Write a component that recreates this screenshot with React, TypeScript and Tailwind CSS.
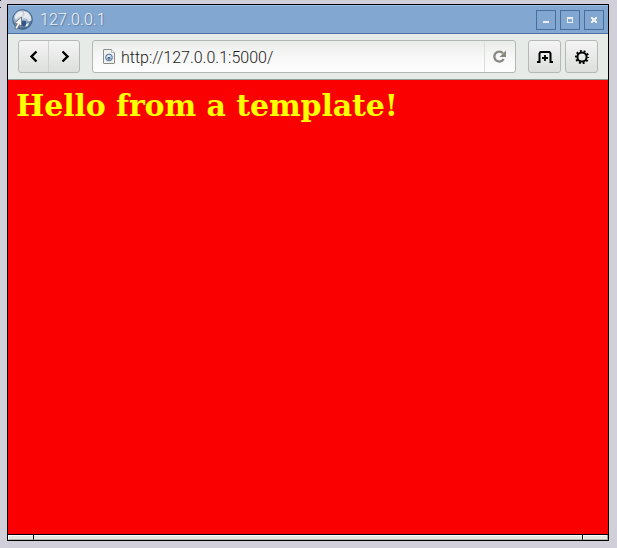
import React from "react";

function GlobeIcon() {
  return (
    <svg width="22" height="22" viewBox="0 0 22 22" className="block shrink-0">
      <defs>
        <radialGradient id="globe" cx="0.42" cy="0.3" r="0.75">
          <stop offset="0" stopColor="#dfe7f0" />
          <stop offset="0.5" stopColor="#9db4d0" />
          <stop offset="1" stopColor="#2f5588" />
        </radialGradient>
      </defs>
      <circle cx="10.5" cy="10.5" r="9.8" fill="url(#globe)" stroke="#426182" />
      <path d="M2.5 8 5 4l4-2 2 2-2 3-3 1-2 3ZM12 2.5l4 1 3 4 .5 4-3 1-2-3-4-1 2-2ZM14 15l3-1-1 3-2.5 1Z" fill="#f0f1ee" opacity=".85" />
      <path d="M10 11.5 14 12v3.5l-2 2-2-1Z" fill="#274d7b" opacity=".9" />
      <path d="M9.5 8v9.5l-2-1.8L5 20.3l-2.2-1.1 2.5-4.5-3-.3Z" fill="#f7f7f2" stroke="#5e686f" strokeWidth=".8" />
    </svg>
  );
}

function PageIcon() {
  return (
    <svg width="14" height="17" viewBox="0 0 14 17" className="-mt-px block shrink-0">
      <path d="M2 1.5h7.5l3 3v10.5q0 .5-.5.5H2q-.5 0-.5-.5V2q0-.5.5-.5Z" fill="#f0f1ee" stroke="#8c8f89" />
      <path d="M9.5 1.5v3h3" fill="#fff" stroke="#b4b7b2" />
      <circle cx="7" cy="9.5" r="3.4" fill="#b5c7dc" stroke="#54779f" />
      <path d="M4.5 8.5 7 7l2 1-2 1Z" fill="#edf1f5" />
      <path d="M7 9v3M5.5 10.5 7 9l1.5 1.5" fill="none" stroke="#3d5c83" />
    </svg>
  );
}

function WindowButton({ children }: { children: React.ReactNode }) {
  return (
    <button className="flex h-5 w-5 items-center justify-center border border-[#496e9e] bg-[#82a7d1]">
      <svg width="18" height="18" viewBox="0 0 18 18" shapeRendering="crispEdges">{children}</svg>
    </button>
  );
}

const toolButton =
  "flex h-[33px] w-[33px] items-center justify-center rounded-[3px] border border-[#b5b9b5] bg-gradient-to-b from-[#f4f4f4] to-[#dcdfdc]";

export default function App() {
  return (
    <div className="flex h-[548px] w-[617px] overflow-hidden bg-[#d0cfda] font-[Roboto,sans-serif]">
      <svg width="7" height="12" className="block shrink-0" shapeRendering="crispEdges">
        <path d="M0 0h1v1H0ZM0 7h1v1H0Z" fill="#222" />
      </svg>
      <div className="mt-1 flex h-[537px] w-[602px] flex-col border border-black">
        <header className="flex h-[29px] shrink-0 items-center border-b border-t border-b-[#4c72a3] border-t-[#9dbfe4] bg-[#82a7d1] pl-1 pr-1">
          <GlobeIcon />
          <div className="ml-[6px] flex-1 text-[16px] font-light leading-5 tracking-[0.12px] text-[#f1f3f3] [text-shadow:1px_1px_1px_#58789f]">127.0.0.1</div>
          <div className="flex gap-1">
            <WindowButton><path d="M6 10h6v2H6Z" fill="#eeeeec" /></WindowButton>
            <WindowButton><path fillRule="evenodd" d="M6 6h6v6H6ZM7 8v3h4V8Z" fill="#eeeeec" /></WindowButton>
            <WindowButton><path d="M6 6h2v1h2V6h2v2h-1v2h1v2h-2v-1H8v1H6v-2h1V8H6Z" fill="#eeeeec" /></WindowButton>
          </div>
        </header>
        <nav className="flex h-[46px] shrink-0 items-start border-b border-[#8f9c96] bg-[#e7ebe8] pl-[10px] pt-[6px]">
          <div className="flex h-[33px] w-[62px] overflow-hidden rounded-[3px] border border-[#b5b9b5] bg-gradient-to-b from-[#f4f4f4] to-[#dcdfdc]">
            <button className="flex w-[30px] items-center justify-center border-r border-[#cfd1cf]">
              <svg width="30" height="31" viewBox="0 0 30 31" className="shrink-0"><path d="m17.5 10.5-5 5 5 5" fill="none" stroke="#000" strokeWidth="2.4" /></svg>
            </button>
            <button className="flex w-[30px] items-center justify-center">
              <svg width="30" height="31" viewBox="0 0 30 31" className="shrink-0"><path d="m13.5 10.5 5 5-5 5" fill="none" stroke="#000" strokeWidth="2.4" /></svg>
            </button>
          </div>
          <div className="ml-3 flex h-[33px] w-[424px] items-center overflow-hidden rounded-[3px] border border-[#b1b7b2] bg-gradient-to-b from-[#eaecea] via-[#f6f7f6] to-[#fdfefd] pl-[9px]">
            <PageIcon />
            <div className="ml-[5px] flex-1 pt-[2px] text-[16px] font-light leading-5 text-[#1b1b1b]">http://127.0.0.1:5000/</div>
            <button className="flex h-full w-[31px] items-center justify-center border-l border-[#dbddda]">
              <svg width="30" height="31" viewBox="0 0 30 31" className="shrink-0">
                <path d="M18 12.2A5 5 0 1 0 18.7 18" fill="none" stroke="#888a82" strokeWidth="2.3" />
                <path d="M21 9.5v6.5h-6.5Z" fill="#888a82" />
              </svg>
            </button>
          </div>
          <button className={toolButton + " ml-3"}>
            <svg width="31" height="31" viewBox="0 0 31 31">
              <path d="M8 21h2.5v-8.5L11.5 11h9l1 1.5V21H24" fill="none" stroke="#000" strokeWidth="2" />
              <path d="M13 17h6M16 14v6" stroke="#000" strokeWidth="1.8" />
            </svg>
          </button>
          <button className={toolButton + " ml-1"}>
            <svg width="31" height="31" viewBox="0 0 31 31" fill="none" stroke="#000">
              <circle cx="16" cy="16" r="4.6" strokeWidth="2" />
              <circle cx="16" cy="16" r="6.1" strokeWidth="1.9" strokeDasharray="1.9 1.933" strokeDashoffset="0.95" />
            </svg>
          </button>
        </nav>
        <main className="flex-1 bg-[#fa0000] pl-2 pt-[7px]">
          <h1 className="whitespace-nowrap font-['DejaVu_Serif',serif] text-[30px] font-bold leading-[37px] tracking-[-0.1px] text-[#ff0]">Hello from a template!</h1>
        </main>
        <footer className="flex h-[6px] shrink-0 border-t border-black bg-[#e3e8e5]">
          <div className="w-[26px] border-b border-l border-r border-b-[#b2bab5] border-l-white border-r-black shadow-[inset_0_1px_#fff]" />
          <div className="flex-1 border-b border-[#b2bab5] shadow-[inset_0_1px_#fff]" />
          <div className="w-[26px] border-b border-l border-r border-b-[#b2bab5] border-l-black border-r-[#98a49d] shadow-[inset_1px_1px_#fff]" />
        </footer>
      </div>
    </div>
  );
}
